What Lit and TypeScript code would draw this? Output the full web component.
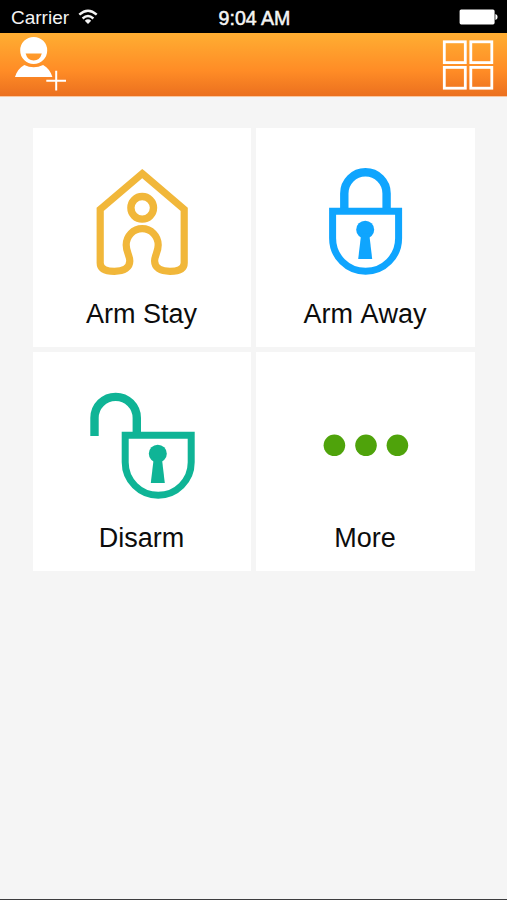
import { LitElement, html, css, svg } from "lit";
import { customElement } from "lit/decorators.js";

const keyhole = svg`<circle cx="36" cy="22" r="9"/><path d="M32 26H40L43 51.3H29Z"/>`;
const body = svg`<path class="line" stroke-width="7" d="M3.4 3.6H69.4V30.6A33 33 0 0 1 3.4 30.6Z"/>`;

const house = html`<svg class="house" width="92" height="108" viewBox="96 168 92 108">
  <path class="line" stroke-width="7.2" d="M142.2 173.6L184.2 209.3V263C184.2 269 178 271.3 170 271.3C160 271.3 154.6 267.5 154.6 261C154.6 255.5 158.2 252 158.2 245A16 16.4 0 0 0 126.2 245C126.2 252 129.8 255.5 129.8 261C129.8 267.5 124.4 271.3 114.4 271.3C106.4 271.3 100.2 269 100.2 263V209.3Z"/>
  <circle class="line" stroke-width="7.4" cx="142.2" cy="207.8" r="11.3"/>
</svg>`;

const locked = html`<svg class="locked" width="73" height="108" viewBox="329.2 168 73 108">
  <path class="line" stroke-width="8.4" d="M344.5 210V193.4A21.1 21.1 0 0 1 386.8 193.4V210"/>
  <g transform="translate(329.4 207.7)">${body}${keyhole}</g>
</svg>`;

const unlocked = html`<svg class="unlocked" width="106" height="108" viewBox="89 392 106 108">
  <path class="line" stroke-width="8.4" d="M94.5 436V418A21.1 21.1 0 0 1 136.8 418V434"/>
  <g transform="translate(121.8 431.7)">${body}${keyhole}</g>
</svg>`;

const dots = html`<svg class="dots" width="85" height="108" viewBox="323 392 85 108">
  <circle cx="334.4" cy="445.3" r="10.8"/><circle cx="366" cy="445.3" r="10.8"/><circle cx="397.4" cy="445.3" r="10.8"/>
</svg>`;

const tiles = [
  { label: "Arm Stay", icon: house },
  { label: "Arm Away", icon: locked },
  { label: "Disarm", icon: unlocked },
  { label: "More", icon: dots },
];

@customElement("app-root")
export class AppRoot extends LitElement {
  static styles = css`
    :host {
      display: flex; flex-direction: column; box-sizing: border-box;
      height: 900px; overflow: hidden; background: #f5f5f5; color: #0c0c0c;
      border-bottom: 1px solid #3c3c3e;
      font-family: "Liberation Sans", Arial, sans-serif;
    }
    svg { display: block; flex: none; fill: currentColor; overflow: visible; }
    .line { fill: none; stroke: currentColor; }
    .status {
      height: 33px; flex: none; box-sizing: border-box; padding: 3px 9px 0 11px;
      background: #000; color: #f4f4f4;
      display: grid; grid-template-columns: 1fr auto 1fr; align-items: center;
      font-size: 19px; line-height: 30px;
    }
    .carrier { display: flex; align-items: center; gap: 9px; }
    .carrier svg, .battery { margin-top: -2px; }
    .time { font-size: 19.6px; -webkit-text-stroke: 0.5px #f4f4f4; }
    .battery { justify-self: end; color: #fff; }
    .bar {
      height: 64px; flex: none; box-sizing: border-box; padding: 4px 13px 0 14px;
      display: flex; justify-content: space-between; color: #fff;
      background: linear-gradient(#ffae32, #ff8c26 60%, #eb701f);
      border-bottom: 1px solid #f9c7a0;
    }
    .grid {
      display: grid; grid-template-columns: 218px 219px; grid-auto-rows: 219px;
      gap: 5px; margin: 31px 0 0 33px;
    }
    .tile {
      background: #fff; display: flex; flex-direction: column; align-items: center;
      padding-top: 40px; box-sizing: border-box;
    }
    .label {
      font-size: 27px; line-height: 32px; margin-top: 22px; padding-right: 1px;
      font-kerning: none;
    }
    .house { color: #f1b73a; }
    .locked { color: #0fa5fe; }
    .unlocked { color: #0fb496; }
    .dots { color: #4fa30b; }
  `;

  render() {
    return html`
      <div class="status">
        <div class="carrier">Carrier
          <svg width="20" height="16" viewBox="0 0 20 16">
            <path class="line" stroke-width="2.4" d="M1.3 5.7Q10 -2.3 18.7 5.7M4.6 9.5Q10 4.6 15.4 9.5"/>
            <path d="M6.8 11.7Q10 9 13.2 11.7L10 15Z"/>
          </svg>
        </div>
        <div class="time">9:04 AM</div>
        <svg class="battery" width="39" height="16" viewBox="0 0 39 16">
          <rect x="0.6" y="0.4" width="35" height="15" rx="1.6"/>
          <path d="M36.4 5Q38.6 5.6 38.6 8Q38.6 10.4 36.4 11Z"/>
        </svg>
      </div>
      <div class="bar">
        <svg width="54" height="56" viewBox="14 37 54 56">
          <path fill-rule="evenodd" d="M33.7 36.9A13.5 13.5 0 0 1 33.7 63.9A13.5 13.5 0 0 1 33.7 36.9ZM25.6 53.4Q27.5 60.4 33.7 60.4Q39.9 60.4 41.8 53.4Z"/>
          <path d="M15 77C16.6 71.6 19.5 67.6 24.3 64.9Q33.7 69.6 43.1 64.9C47.9 67.6 50.8 71.6 52.4 77Z"/>
          <path class="line" stroke-width="2" d="M46.3 80.7H66M56.2 70.8V90.6"/>
        </svg>
        <svg width="52" height="56" viewBox="442 37 52 56">
          <g class="line" stroke-width="2.8">
            <rect x="444.3" y="41.8" width="21" height="20.8"/><rect x="470.8" y="41.8" width="21" height="20.8"/>
            <rect x="444.3" y="67.4" width="21" height="20.8"/><rect x="470.8" y="67.4" width="21" height="20.8"/>
          </g>
        </svg>
      </div>
      <div class="grid">
        ${tiles.map((t) => html`<div class="tile">${t.icon}<div class="label">${t.label}</div></div>`)}
      </div>
    `;
  }
}
